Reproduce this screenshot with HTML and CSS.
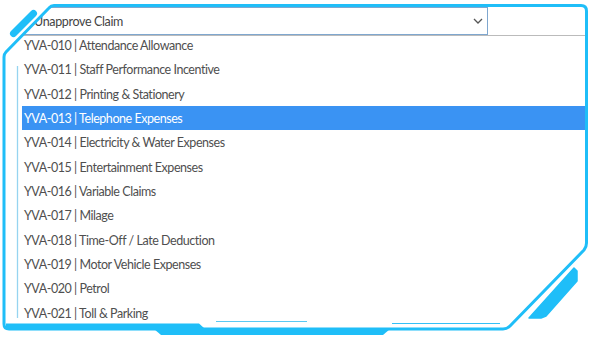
FILE: index.html
```html
<!DOCTYPE html>
<html lang="en">
<head>
  <meta charset="UTF-8" />
  <title>Claim Picker</title>
  <link rel="stylesheet" href="styles.css">
</head>
<body>
  <div class="stage">
    <div class="select">
      <span>Unapprove Claim</span>
      <svg class="chevron" width="10" height="6" viewBox="0 0 10 6"><path d="M1 1l4 4 4-4" fill="none" stroke="#555" stroke-width="1.3"/></svg>
    </div>
    <ul class="options">
      <li>YVA-010 | Attendance Allowance</li>
      <li>YVA-011 | Staff Performance Incentive</li>
      <li>YVA-012 | Printing &amp; Stationery</li>
      <li class="active">YVA-013 | Telephone Expenses</li>
      <li>YVA-014 | Electricity &amp; Water Expenses</li>
      <li>YVA-015 | Entertainment Expenses</li>
      <li>YVA-016 | Variable Claims</li>
      <li>YVA-017 | Milage</li>
      <li>YVA-018 | Time-Off / Late Deduction</li>
      <li>YVA-019 | Motor Vehicle Expenses</li>
      <li>YVA-020 | Petrol</li>
      <li>YVA-021 | Toll &amp; Parking</li>
    </ul>

    <!-- decorative frame drawn over the content -->
    <svg class="frame" width="600" height="340" viewBox="0 0 600 340">
      <path fill="#fff" fill-rule="evenodd" d="M0 0H600V340H0Z M54 5.5H581Q586.5 5.5 586.5 11V243Q586.5 247 584 250L510 326Q507 329 503 329H9Q4 329 4 324V57Q4 54 6 52L49 8Q51 5.5 54 5.5Z"/>
      <path fill="none" stroke="#1fbef8" stroke-width="3" stroke-linejoin="round" d="M54 5.5H581Q586.5 5.5 586.5 11V243Q586.5 247 584 250L510 326Q507 329 503 329H9Q4 329 4 324V57Q4 54 6 52L49 8Q51 5.5 54 5.5Z"/>
      <line x1="13.5" y1="33.5" x2="33.5" y2="13.5" stroke="#1fbef8" stroke-width="7" stroke-linecap="round"/>
      <path fill="#1fbef8" stroke="#1fbef8" stroke-width="1.5" stroke-linejoin="round" d="M574 268L577 271V281L546 316L541 318H529Z"/>
      <path fill="#1fbef8" d="M6 323.5H199L204 328H6Z"/>
      <path fill="#1fbef8" d="M154 329L161 335H383L390 329Z"/>
      <line x1="17.5" y1="66" x2="17.5" y2="318" stroke="#96d4f0" stroke-width="1.3"/>
      <line x1="216" y1="321.5" x2="307" y2="321.5" stroke="#5ac8f2" stroke-width="1"/>
      <line x1="392" y1="323.5" x2="500" y2="323.5" stroke="#33c0f6" stroke-width="1"/>
    </svg>
  </div>
</body>
</html>
```

FILE: styles.css
```css
body {
  margin: 0;
  font-family: Lato, "Noto Sans", sans-serif;
}

.stage {
  position: relative;
  width: 600px;
  height: 340px;
  padding: 7px 0 0 22px;
  box-sizing: border-box;
  background: #fff;
  overflow: hidden;
}

.select {
  position: relative;
  z-index: 1;
  width: 466px;
  height: 28px;
  box-sizing: border-box;
  padding: 0 4px 0 11px;
  border: 1px solid #7fa7cf;
  background: #fff;
  display: flex;
  align-items: center;
  justify-content: space-between;
  font-size: 12.5px;
  letter-spacing: -0.35px;
  color: #444;
}

.chevron {
  display: block;
}

.options {
  list-style: none;
  margin: 0;
  padding: 0;
  width: 570px;
  border-top: 1px solid #bbb;
}

.options li {
  height: 23.33px;
  padding: 1px 0 0 2px;
  line-height: 23.33px;
  font-size: 12.5px;
  letter-spacing: -0.45px;
  color: #4f4f4f;
  white-space: nowrap;
}

.options li:first-child {
  margin-top: -3px;
}

.options li.active {
  background: #3a93f3;
  color: #fff;
}

.frame {
  position: absolute;
  top: 0;
  left: 0;
  z-index: 2;
  pointer-events: none;
}
```
